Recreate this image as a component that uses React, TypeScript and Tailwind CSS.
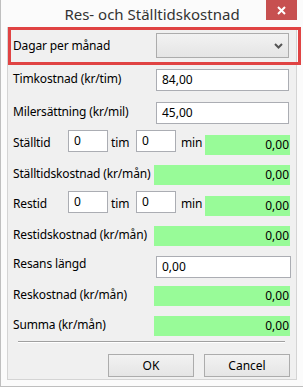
import type { ReactNode } from "react";

const font = { fontFamily: '"Noto Sans", "Open Sans", sans-serif' };

function TextBox({ value, className }: { value: string; className: string }) {
  return (
    <div
      className={`flex h-[22px] shrink-0 items-start border border-[#abadb3] bg-white pl-[5px] pt-[2px] text-[12px] leading-[16px] text-black ${className}`}
    >
      {value}
    </div>
  );
}

function GreenBox({ className }: { className: string }) {
  return (
    <div
      className={`flex h-[20px] shrink-0 items-center justify-end bg-[#98fb98] pr-[1px] text-[12px] leading-[16px] text-black ${className}`}
    >
      0,00
    </div>
  );
}

function Row({ mt, h, children }: { mt: string; h: string; children: ReactNode }) {
  return <div className={`flex shrink-0 items-start ${mt} ${h}`}>{children}</div>;
}

function Label({ children, className = "" }: { children: ReactNode; className?: string }) {
  return (
    <div className={`shrink-0 whitespace-nowrap text-[12px] leading-[16px] tracking-[-0.15px] text-black ${className}`}>
      {children}
    </div>
  );
}

function TimeRow({ label, mt }: { label: string; mt: string }) {
  return (
    <Row mt={mt} h="h-[25px]">
      <Label className="mt-[5px] w-[55px]">{label}</Label>
      <TextBox value="0" className="w-[40px]" />
      <Label className="mt-[5px] w-[28px] pl-[3px]">tim</Label>
      <TextBox value="0" className="w-[40px]" />
      <Label className="mt-[5px] w-[29px] pl-[5px]">min</Label>
      <GreenBox className="mt-[5px] w-[85px]" />
    </Row>
  );
}

function CostRow({ label, mt }: { label: string; mt: string }) {
  return (
    <Row mt={mt} h="h-[20px]">
      <Label className="mt-[1px] w-[141px]">{label}</Label>
      <GreenBox className="w-[136px]" />
    </Row>
  );
}

export default function App() {
  return (
    <div
      className="relative flex h-[387px] w-[303px] flex-col border-b border-l border-[#bfbfbf] bg-[#fbfbfb]"
      style={font}
    >
      <div className="relative flex h-[27px] shrink-0 items-start justify-center pt-[4px] text-[15px] leading-[20px] text-[#333333]">
        Res- och Ställtidskostnad
        <div className="absolute right-[6px] top-0 flex h-[20px] w-[31px] items-center justify-center bg-[#c75050]">
          <svg width="9" height="9" viewBox="0 0 9 9">
            <path d="M1 1 L8 8 M8 1 L1 8" stroke="white" strokeWidth="2" />
          </svg>
        </div>
      </div>

      <div className="ml-[6px] mr-[6px] flex h-[353px] flex-col border border-[#d4d4d4] bg-[#f0f0f0] pl-[5px]">
        <Row mt="mt-[5px]" h="h-[25px]">
          <Label className="mt-[5px] w-[143px]">Dagar per månad</Label>
          <div className="flex h-[25px] w-[133px] items-center justify-end border border-[#acacac] bg-gradient-to-b from-[#f2f2f2] to-[#e5e5e5] pr-[5px]">
            <svg width="9" height="6" viewBox="0 0 9 6">
              <path d="M1 1 L4.5 4.5 L8 1" fill="none" stroke="#555555" strokeWidth="2" />
            </svg>
          </div>
        </Row>

        <Row mt="mt-[11px]" h="h-[22px]">
          <Label className="mt-[2px] w-[143px]">Timkostnad (kr/tim)</Label>
          <TextBox value="84,00" className="w-[133px]" />
        </Row>

        <Row mt="mt-[11px]" h="h-[22px]">
          <Label className="mt-[2px] w-[143px]">Milersättning (kr/mil)</Label>
          <TextBox value="45,00" className="w-[133px]" />
        </Row>

        <TimeRow label="Ställtid" mt="mt-[6px]" />
        <CostRow label="Ställtidskostnad (kr/mån)" mt="mt-[10px]" />
        <TimeRow label="Restid" mt="mt-[6px]" />
        <CostRow label="Restidskostnad (kr/mån)" mt="mt-[10px]" />

        <Row mt="mt-[10px]" h="h-[22px]">
          <Label className="w-[143px]">Resans längd</Label>
          <TextBox value="0,00" className="w-[135px]" />
        </Row>

        <CostRow label="Reskostnad (kr/mån)" mt="mt-[8px]" />
        <CostRow label="Summa (kr/mån)" mt="mt-[10px]" />

        <div className="ml-[5px] mt-[5px] h-[2px] w-[267px] shrink-0 border-t border-[#a0a0a0] bg-white" />

        <div className="mt-[11px] flex shrink-0 gap-[10px] pl-[95px]">
          <div className="flex h-[23px] w-[86px] items-center justify-center border border-[#acacac] bg-gradient-to-b from-[#f2f2f2] to-[#e5e5e5] text-[12px] text-black">
            OK
          </div>
          <div className="flex h-[23px] w-[86px] items-center justify-center border border-[#acacac] bg-gradient-to-b from-[#f2f2f2] to-[#e5e5e5] text-[12px] text-black">
            Cancel
          </div>
        </div>
      </div>

      <div className="pointer-events-none absolute left-[7px] top-[27px] h-[38px] w-[293px] border-[3px] border-[#e04343]" />
    </div>
  );
}
